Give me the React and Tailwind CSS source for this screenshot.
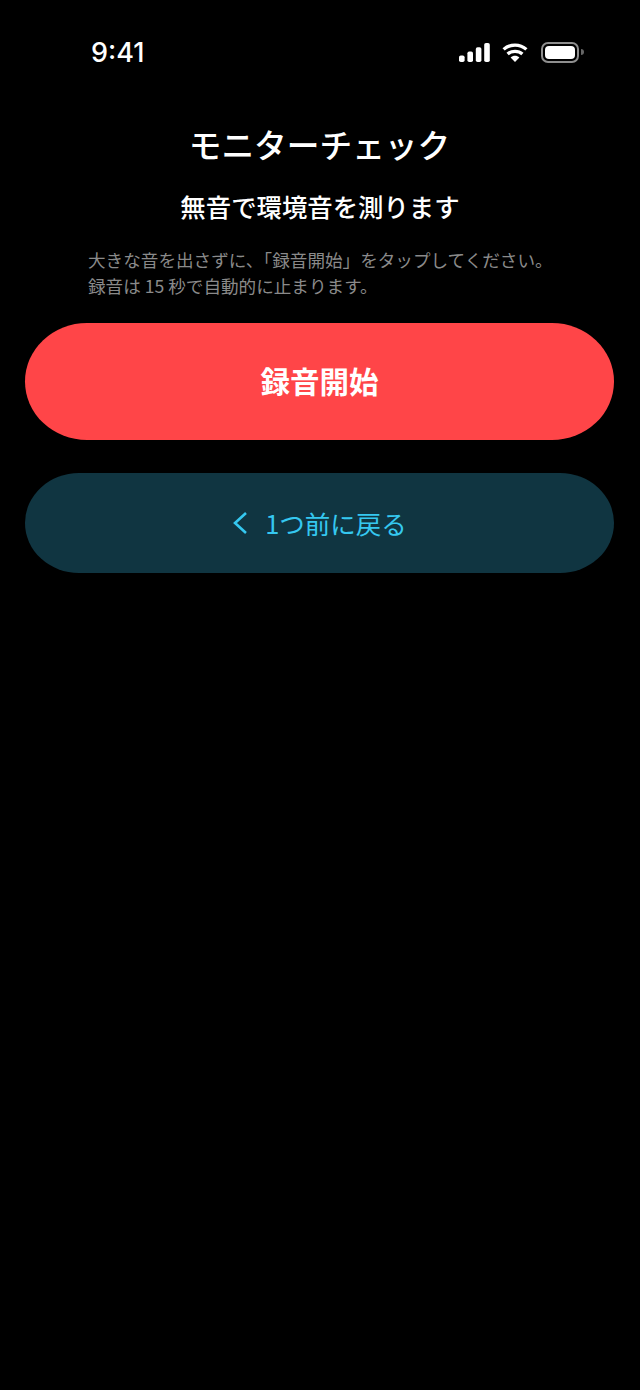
import React from 'react';

function StatusBar() {
  return (
    <div className="flex items-center justify-between h-[104px] pl-[91px] pr-[56px]">
      <span className="font-['Inter',sans-serif] text-[27px] font-medium leading-none text-white">9:41</span>
      <div className="flex items-center gap-[12px]">
        <svg width="31" height="19" viewBox="0 0 31 19" fill="#fff">
          <rect x="0" y="12.5" width="5.6" height="6.5" rx="1.8" />
          <rect x="8.4" y="8.5" width="5.6" height="10.5" rx="1.8" />
          <rect x="16.8" y="4.2" width="5.6" height="14.8" rx="1.8" />
          <rect x="25.2" y="0" width="5.6" height="19" rx="1.8" />
        </svg>
        <svg width="26" height="19" viewBox="0 0 26 19" fill="none">
          <path d="M13 19 L8.6 14.4 C11 12.2 15 12.2 17.4 14.4 Z" fill="#fff" />
          <path d="M5.6 11 C9.6 7.4 16.4 7.4 20.4 11" stroke="#fff" strokeWidth="3.3" />
          <path d="M1.6 6.4 C8 0.6 18 0.6 24.4 6.4" stroke="#fff" strokeWidth="3.3" />
        </svg>
        <div className="flex items-center gap-[2px] ml-[1px]">
          <div className="w-[38px] h-[21px] rounded-[7px] border-2 border-[#8e8e8e] p-[2px]">
            <div className="w-full h-full rounded-[4px] bg-white" />
          </div>
          <div className="w-[3px] h-[6px] rounded-r-full bg-[#666]" />
        </div>
      </div>
    </div>
  );
}

export default function App() {
  return (
    <div className="w-[640px] h-[1390px] bg-black text-white font-['Noto_Sans_CJK_JP',sans-serif] overflow-hidden">
      <StatusBar />
      <h1 className="mt-[17px] pr-[1px] text-center text-[32.7px] font-medium leading-[46px]">モニターチェック</h1>
      <h2 className="mt-[21px] text-center text-[25.4px] font-medium leading-[36px]">無音で環境音を測ります</h2>
      <p className="mt-[23px] pl-[88px] text-[17.6px] leading-[26px] text-[#8a8a8a]">
        大きな音を出さずに、「録音開始」をタップしてください。
        <br />
        録音は 15 秒で自動的に止まります。
      </p>
      <div className="mt-[24px] px-[25px] flex flex-col gap-[33px]">
        <button className="w-[589px] h-[117px] pb-[2px] rounded-[62px/58.5px] bg-[#ff4548] text-[29.5px] font-bold text-white">
          録音開始
        </button>
        <button className="w-[589px] h-[100px] rounded-[54px/50px] bg-[#103541] text-[25.5px] text-[#35c8f0] flex items-center justify-center gap-[17px]">
          <svg width="16" height="24" viewBox="0 0 16 24" fill="none" stroke="#35c8f0" strokeWidth="2.6">
            <path d="M14 2 L3 12 L14 22" />
          </svg>
          <span>1つ前に戻る</span>
        </button>
      </div>
    </div>
  );
}
